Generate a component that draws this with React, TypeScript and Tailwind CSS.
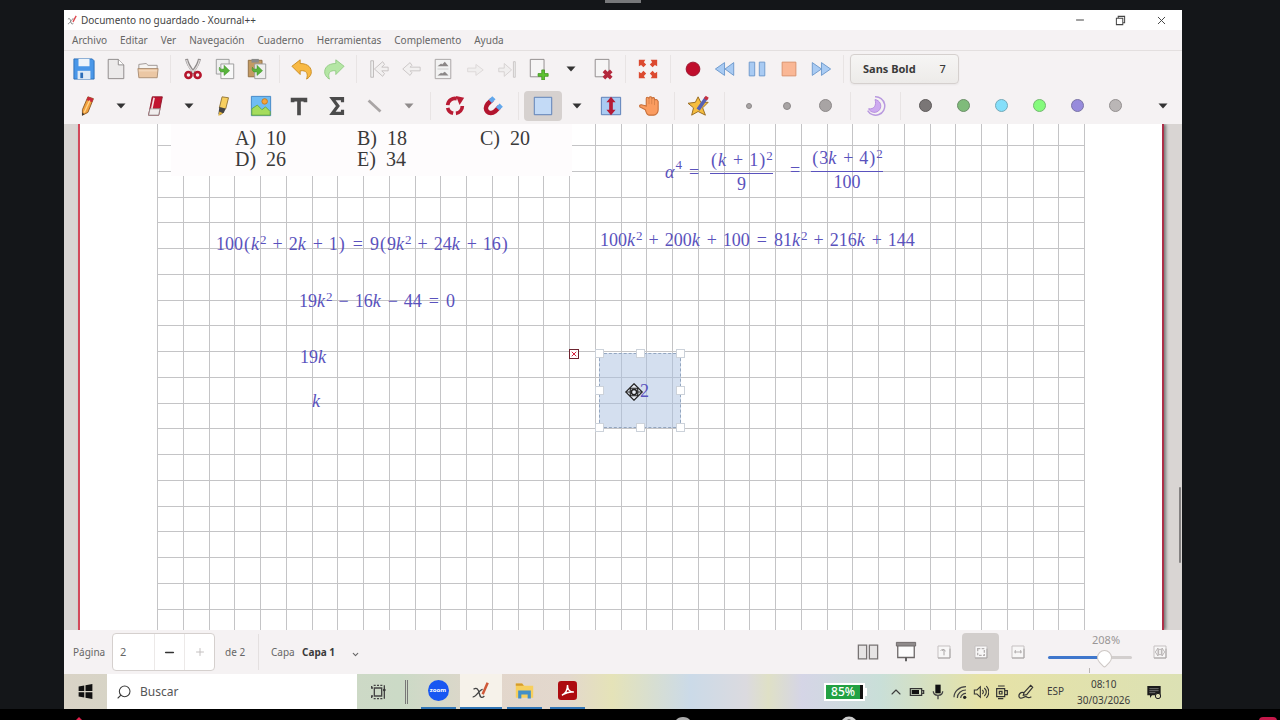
import type { ReactNode } from "react"
import { Search, ChevronUp, ChevronDown, Minus, Plus, X } from "lucide-react"

type IconProps = { children: ReactNode; className?: string }

function Icon({ children, className = "size-[22px]" }: IconProps) {
  return (
    <svg viewBox="0 0 24 24" fill="none" className={className} aria-hidden="true">
      {children}
    </svg>
  )
}

function Arrow({ color = "#333" }: { color?: string }) {
  return (
    <Icon className="size-3">
      <path d="M3 7h18l-9 10z" fill={color} />
    </Icon>
  )
}

type ToolProps = { label: string; children: ReactNode; className?: string }

function FileTool({ label, children }: ToolProps) {
  return (
    <button aria-label={label} className="flex h-8 w-8 shrink-0 items-center justify-center">
      {children}
    </button>
  )
}

function PenTool({ label, children, className = "" }: ToolProps) {
  return (
    <button
      aria-label={label}
      className={`flex h-[30px] w-[38px] shrink-0 items-center justify-center rounded ${className}`}
    >
      {children}
    </button>
  )
}

function DropTool({ label, color, className = "" }: { label: string; color?: string; className?: string }) {
  return (
    <button
      aria-label={label}
      className={`flex h-[30px] w-[30px] shrink-0 items-center justify-center ${className}`}
    >
      <Arrow color={color} />
    </button>
  )
}

function Divider({ className }: { className: string }) {
  return (
    <div className={`flex h-7 shrink-0 justify-center ${className}`}>
      <div className="w-px bg-[#e8e4e4]" />
    </div>
  )
}

const menus = ["Archivo", "Editar", "Ver", "Navegación", "Cuaderno", "Herramientas", "Complemento", "Ayuda"]

const widths = [
  { label: "Fino", size: "size-[6px]" },
  { label: "Medio", size: "size-2" },
  { label: "Grueso", size: "size-[13px]" },
]

const colors = [
  { label: "Gris oscuro", bg: "bg-[#7a7676] border-[#5e5a5a]" },
  { label: "Verde", bg: "bg-[#7fbb7a] border-[#6b8f68]" },
  { label: "Celeste", bg: "bg-[#84dffa] border-[#74a9b8]" },
  { label: "Verde claro", bg: "bg-[#84fb7c] border-[#74b870]" },
  { label: "Violeta", bg: "bg-[#978bdc] border-[#7a74a6]" },
  { label: "Gris", bg: "bg-[#bab6b6] border-[#949090]" },
]

function TitleBar() {
  return (
    <header className="flex h-5 items-center bg-white pl-[3px] text-[10px] text-[#444]">
      <svg viewBox="0 0 24 24" className="mr-[3px] size-[11px]" fill="none" aria-hidden="true">
        <path d="M2 9c4-3 5 0 6 5s3 7 6 4M14 8c-4 0-8 12-12 11" stroke="#777" strokeWidth="2" />
        <path d="M13 15L20 2" stroke="#e0484f" strokeWidth="3" />
      </svg>
      <h1 className="grow">Documento no guardado - Xournal++</h1>
      <div className="flex">
        <button aria-label="Minimizar" className="flex w-10 items-center justify-center">
          <Minus className="size-3" strokeWidth={2} />
        </button>
        <button aria-label="Restaurar" className="flex w-10 items-center justify-center">
          <Icon className="size-[11px]">
            <path d="M3 7h14v14H3zM7 7V3h14v14h-4" stroke="#444" strokeWidth="2.2" />
          </Icon>
        </button>
        <button aria-label="Cerrar" className="flex w-[42px] items-center justify-center">
          <X className="size-[13px]" strokeWidth={1.8} />
        </button>
      </div>
    </header>
  )
}

function FileToolbar() {
  return (
    <div className="flex h-9 items-center px-1">
      <FileTool label="Guardar">
        <Icon>
          <path d="M1 1h20l2 2v20H1z" fill="#4a97e8" stroke="#2b6db8" />
          <path d="M6 1h12v8H6z" fill="#eef4fa" />
          <path d="M5 14h14v9H5z" fill="#dfeaf5" />
          <path d="M8 16h3v6H8z" fill="#2b6db8" />
        </Icon>
      </FileTool>
      <FileTool label="Nuevo">
        <Icon>
          <path d="M3.500 1.500h11l6 6v15h-17z" fill="#eceaea" stroke="#8a8686" />
          <path d="M14.500 1.500v6h6" fill="#fff" stroke="#8a8686" />
        </Icon>
      </FileTool>
      <FileTool label="Abrir">
        <Icon>
          <path d="M2 12V7l8-1 2 2h10v4" fill="#f6f4f2" stroke="#9a9390" />
          <path d="M1 11.500h22l-1 10H2z" fill="#ebc7a4" stroke="#a98c72" />
          <path d="M2 14h20" stroke="#f6dfc8" />
        </Icon>
      </FileTool>
      <Divider className="w-[13px]" />
      <FileTool label="Cortar">
        <Icon>
          <path d="M5 1c1 7 5 11 9 16M19 1c-1 7-5 11-9 16" stroke="#8d8989" strokeWidth="3.200" />
          <path d="M5 2c1 7 5 11 8 14M19 2c-1 7-5 11-8 14" stroke="#dedada" strokeWidth="1.400" />
          <circle cx="7" cy="18.500" r="3.300" stroke="#b5152c" strokeWidth="2.800" />
          <circle cx="17" cy="18.500" r="3.300" stroke="#b5152c" strokeWidth="2.800" />
        </Icon>
      </FileTool>
      <FileTool label="Copiar">
        <Icon>
          <path d="M2.500 1.500h14v16h-14z" fill="#efefef" stroke="#999" />
          <path d="M7.500 6.500h14v16h-14z" fill="#f8f8f8" stroke="#999" />
          <path d="M6 10c1 3 3 2 5 2V8l6 6-6 5v-4c-4 1-6-1-5-5z" fill="#58b43c" stroke="#3d8f27" strokeWidth="0.600" />
        </Icon>
      </FileTool>
      <FileTool label="Pegar">
        <Icon>
          <path d="M2.500 2.500h15v18h-15z" fill="#c39a62" stroke="#8c6c42" />
          <path d="M6 1h8v4H6z" fill="#8b8b8b" />
          <path d="M9.500 6.500h12v16h-12z" fill="#efefef" stroke="#999" />
          <path d="M7 10c1 3 3 2 5 2V8l6 6-6 5v-4c-4 1-6-1-5-5z" fill="#58b43c" stroke="#3d8f27" strokeWidth="0.600" />
        </Icon>
      </FileTool>
      <Divider className="w-[13px]" />
      <FileTool label="Deshacer">
        <Icon>
          <path d="M1 9l9-7v4c9 0 13 5 12 11-1 3-3 5-5 6 2-6 0-10-7-9v4z" fill="#f8b943" stroke="#c98b20" />
        </Icon>
      </FileTool>
      <FileTool label="Rehacer">
        <Icon>
          <path d="M23 9l-9-7v4C5 6 1 11 2 17c1 3 3 5 5 6-2-6 0-10 7-9v4z" fill="#b4e6a4" stroke="#93cb84" />
        </Icon>
      </FileTool>
      <Divider className="w-[13px]" />
      <FileTool label="Primera página">
        <Icon>
          <path d="M3 3h3v18H3z" fill="#eee" stroke="#bdb9b9" />
          <path d="M7 12l9-8 2 3-3 3h7v4h-7l3 3-2 3z" fill="#f2f0f0" stroke="#c4c0c0" />
        </Icon>
      </FileTool>
      <FileTool label="Página anterior">
        <Icon>
          <path d="M3 12l8-7 2 3-2 2h11v4H11l2 2-2 3z" fill="#f2f0f0" stroke="#c8c4c4" />
        </Icon>
      </FileTool>
      <FileTool label="Ir a página">
        <Icon>
          <path d="M3.500 1.500h17v21h-17z" fill="#f2f2f2" stroke="#a5a1a1" />
          <path d="M6 9l4-3 1 1 3-3 4 5zM6 19l4-3 1 1 3-2 4 4z" fill="#8b8787" />
          <path d="M6 12h12" stroke="#ccc" />
        </Icon>
      </FileTool>
      <FileTool label="Página siguiente">
        <Icon>
          <path d="M21 13l-8-6v4H4v4h9v4z" fill="#f0eeee" stroke="#dcd8d8" />
        </Icon>
      </FileTool>
      <FileTool label="Última página">
        <Icon>
          <path d="M17 13L9 6v5H3v4h6v5z" fill="#f0eeee" stroke="#d4d0d0" />
          <path d="M19 4h2v17h-2z" fill="#eee" stroke="#c9c5c5" />
        </Icon>
      </FileTool>
      <FileTool label="Añadir página">
        <Icon>
          <path d="M2.500 1.500h15v19h-15z" fill="#f6f5f5" stroke="#8c8888" />
          <path d="M15 13h3v4h4v3h-4v4h-3v-4h-4v-3h4z" fill="#5cc331" stroke="#3c8f1c" strokeWidth="0.800" />
        </Icon>
      </FileTool>
      <FileTool label="Tipo de página">
        <Arrow />
      </FileTool>
      <FileTool label="Eliminar página">
        <Icon>
          <path d="M3.500 1.500h15v19h-15z" fill="#f6f5f5" stroke="#8c8888" />
          <path d="M13 14l8 8M21 14l-8 8" stroke="#b3283c" strokeWidth="4" />
        </Icon>
      </FileTool>
      <Divider className="w-[13px]" />
      <FileTool label="Pantalla completa">
        <Icon>
          <path
            d="M2 2h7L7.500 4.500 10 7 7 10 4.500 7.500 2 9zM22 2h-7l1.500 2.500L14 7l3 3 2.500-2.500L22 9zM2 22h7l-1.500-2.500L10 17l-3-3-2.500 2.500L2 15zM22 22h-7l1.500-2.500L14 17l3-3 2.500 2.500L22 15z"
            fill="#dc4a30"
          />
        </Icon>
      </FileTool>
      <Divider className="w-[13px]" />
      <FileTool label="Grabar">
        <Icon>
          <circle cx="12" cy="12" r="7.500" fill="#c00d2c" stroke="#97102a" />
        </Icon>
      </FileTool>
      <FileTool label="Retroceder">
        <Icon>
          <path d="M11.500 5v14L1.500 12zM21.500 5v14l-9.500-7z" fill="#a9cbf3" stroke="#6b97cb" />
        </Icon>
      </FileTool>
      <FileTool label="Pausa">
        <Icon>
          <path d="M3.500 4.500h6v15h-6zM14.500 4.500h6v15h-6z" fill="#a9cbf3" stroke="#6b97cb" />
        </Icon>
      </FileTool>
      <FileTool label="Detener">
        <Icon>
          <path d="M4.500 4.500h15v15h-15z" fill="#fab795" stroke="#d98f69" />
        </Icon>
      </FileTool>
      <FileTool label="Avanzar">
        <Icon>
          <path d="M2.500 5v14l10-7zM12.500 5v14l10-7z" fill="#a9cbf3" stroke="#6b97cb" />
        </Icon>
      </FileTool>
      <Divider className="w-[13px]" />
      <button className="flex h-[30px] items-center gap-6 rounded border border-[#d5d0ce] bg-linear-to-b from-[#f6f5f4] to-[#edebe9] px-3 text-[11px] font-bold text-[#3a3a3a] shadow-xs">
        <span>Sans Bold</span>
        <span className="font-medium">7</span>
      </button>
    </div>
  )
}

function PenToolbar() {
  return (
    <div className="flex h-[37px] items-center px-1">
      <PenTool label="Lápiz">
        <Icon>
          <path d="M13 2l6 2-6 15-6 3 0-6z" fill="#f3a13c" stroke="#8b5a24" />
          <path d="M13 2l6 2-1.500 4-6-2.500z" fill="#c8293b" />
          <path d="M15 6L9 19" stroke="#ffd58a" strokeWidth="1.500" />
          <path d="M7 19l2 2-2.500 1.500z" fill="#333" />
        </Icon>
      </PenTool>
      <DropTool label="Opciones de lápiz" />
      <PenTool label="Borrador">
        <Icon>
          <path d="M9 2h11l-4 20H5z" fill="#c2132f" stroke="#8e1628" />
          <path d="M6.500 15h11L16 22H5z" fill="#f1eded" stroke="#8e8888" />
          <path d="M11 3L8.500 15" stroke="#f3dfe2" strokeWidth="1.800" />
        </Icon>
      </PenTool>
      <DropTool label="Opciones de borrador" />
      <PenTool label="Resaltador">
        <Icon>
          <path d="M11 2l7 1-3 12-7-1z" fill="#f7cf5f" stroke="#927434" />
          <path d="M8 13l7 2-2 4-4 3-2-1z" fill="#444" />
          <path d="M8 18l4 2-5 3z" fill="#e2b33c" />
        </Icon>
      </PenTool>
      <PenTool label="Imagen">
        <Icon>
          <path d="M1.500 1.500h21v21h-21z" fill="#6fbcf4" stroke="#3f83c4" />
          <path d="M2 15l6-4 5 5 4-3 5 5v4H2z" fill="#a5dc5c" stroke="#68a83e" />
          <circle cx="16" cy="7" r="3" fill="#f5a43a" stroke="#c57a1e" />
        </Icon>
      </PenTool>
      <PenTool label="Texto">
        <Icon>
          <path d="M4 5h16M12 5v17M5 3v5M19 3v5" stroke="#4b4b4b" strokeWidth="4" />
        </Icon>
      </PenTool>
      <PenTool label="Fórmula">
        <Icon>
          <path d="M18 8V4H7l6 8-6 8h11v-4" stroke="#4b4b4b" strokeWidth="3.500" />
        </Icon>
      </PenTool>
      <PenTool label="Línea">
        <Icon>
          <path d="M5 6l13 12" stroke="#a9a5a5" strokeWidth="3" />
        </Icon>
      </PenTool>
      <DropTool label="Formas" color="#8f8b8b" />
      <Divider className="w-3" />
      <PenTool label="Rotación">
        <Icon>
          <path d="M20 12a8 8 0 0 1-7 8M10 20a8 8 0 0 1-6-6M4 11a8 8 0 0 1 10-7" stroke="#b91c34" strokeWidth="4" />
          <path d="M13 1l9 2-5 8z" fill="#b91c34" />
        </Icon>
      </PenTool>
      <PenTool label="Imán">
        <Icon>
          <path d="M11 5l-5 5c-5 6 2 13 8 8l5-5" stroke="#b3152e" strokeWidth="5" />
          <path d="M9 7l4-4M17 15l4-4" stroke="#62a8ec" strokeWidth="5" />
        </Icon>
      </PenTool>
      <Divider className="w-3" />
      <PenTool label="Selección rectangular" className="bg-[#d6d1cf]">
        <Icon>
          <path d="M2.500 2.500h19v19h-19z" fill="#c3daf6" stroke="#5579b4" />
        </Icon>
      </PenTool>
      <DropTool label="Opciones de selección" />
      <PenTool label="Espacio vertical">
        <Icon>
          <path d="M1.500 2.500h21v19h-21z" fill="#aacbf2" stroke="#5579b4" />
          <path d="M12 2l5 6h-3v8h3l-5 6-5-6h3V8H7z" fill="#b51a36" />
        </Icon>
      </PenTool>
      <PenTool label="Mano">
        <Icon>
          <path
            d="M8 16L2 13c-1-2 1-3 3-2l4 1 0-8c0-2 2-2 3 0V3c1-2 3-1 3 0v1c1-2 3-1 3 0v2c1-2 3-1 4 1v9c0 3-2 6-5 6h-5c-2 0-3-2-4-6z"
            fill="#fb9c60"
            stroke="#c8703a"
            strokeWidth="1.200"
          />
          <path d="M12 4v6M15 4v6M18 6v5" stroke="#d9824c" />
        </Icon>
      </PenTool>
      <Divider className="w-3" />
      <PenTool label="Predeterminado">
        <Icon>
          <path d="M11 2l3 6 8 0-6 6 3 8-8-4-7 4 2-8-6-5 8-1z" fill="#f5bd3f" stroke="#94671d" />
          <path d="M20 3L11 16" stroke="#5660b4" strokeWidth="4" />
          <path d="M21 2l-2 3" stroke="#c6303f" strokeWidth="4" />
        </Icon>
      </PenTool>
      <Divider className="w-3" />
      {widths.map((w) => (
        <PenTool key={w.label} label={w.label}>
          <span className={`rounded-full border border-[#8d8989] bg-[#a8a4a4] ${w.size}`} />
        </PenTool>
      ))}
      <Divider className="w-3" />
      <PenTool label="Relleno">
        <Icon>
          <path d="M12 2a10 10 0 1 1-8 15" stroke="#b99adf" strokeWidth="1.600" />
          <path d="M12 5a7 7 0 1 1-7 10c6 1 9-4 7-10z" fill="#cdaaf0" stroke="#b38bdc" />
        </Icon>
      </PenTool>
      <Divider className="w-3" />
      {colors.map((c) => (
        <PenTool key={c.label} label={c.label}>
          <span className={`size-[13px] rounded-full border ${c.bg}`} />
        </PenTool>
      ))}
      <DropTool label="Más herramientas" className="ml-auto" />
    </div>
  )
}

// math typesetting helpers
const V = ({ children }: { children: ReactNode }) => <i className="mr-px">{children}</i>
const P = ({ children }: { children: ReactNode }) => <span className="mx-px">{children}</span>
const Op = ({ children }: { children: ReactNode }) => <span className="mx-[6px]">{children}</span>
const Rel = () => <span className="mx-[7px]">=</span>
const Sq = () => <sup className="text-[13px]">2</sup>

function Frac({ top, bottom }: { top: ReactNode; bottom: ReactNode }) {
  return (
    <span className="mx-1 inline-flex flex-col items-center">
      <span className="border-b border-[#5a52bd] pb-0.5">{top}</span>
      <span className="leading-5">{bottom}</span>
    </span>
  )
}

function Formula({ children, className }: { children: ReactNode; className: string }) {
  return (
    <div
      className={`absolute flex items-center font-['Liberation_Serif',serif] text-[18px] leading-[22px] whitespace-nowrap text-[#5a52bd] ${className}`}
    >
      {children}
    </div>
  )
}

const answers = [
  ["A)", "10"],
  ["B)", "18"],
  ["C)", "20"],
  ["D)", "26"],
  ["E)", "34"],
]

const columns = Array.from({ length: 37 }, (_, i) => Math.round(i * 25.75))
const rows = Array.from({ length: 40 }, (_, i) => Math.round(21 + i * 25.75))

const handles = [
  "-left-[5px] -top-[5px]",
  "left-[36px] -top-[5px]",
  "-right-[5px] -top-[5px]",
  "-left-[5px] top-[32px]",
  "-right-[5px] top-[32px]",
  "-left-[5px] -bottom-[5px]",
  "left-[36px] -bottom-[5px]",
  "-right-[5px] -bottom-[5px]",
]

function Canvas() {
  return (
    <main className="relative flex grow overflow-hidden bg-[#d9d5d3] pr-[18px] pl-[14px]">
      <div className="relative grow overflow-hidden border-x-2 border-l-[#d2485a] border-r-[#ad2f48] bg-white shadow-[2px_0_3px_#777]">
        <svg className="absolute top-0 left-[77px] h-full w-[928px]" aria-hidden="true">
          {columns.map((x) => (
            <line key={x} x1={x + 0.5} x2={x + 0.5} y1="0" y2="100%" stroke="#c4c4c6" />
          ))}
          {rows.map((y) => (
            <line key={y} x1="0" x2="100%" y1={y + 0.5} y2={y + 0.5} stroke="#c4c4c6" />
          ))}
        </svg>

        <div className="absolute top-0 left-[91px] w-[401px] bg-[#fefcfd] pt-1 pb-[6px] pl-16">
          <ul className="grid grid-cols-[122px_123px_1fr] font-['Liberation_Serif',serif] text-[20px] leading-[21px] text-[#3a3a3a]">
            {answers.map(([letter, value]) => (
              <li key={letter} className="flex gap-[10px]">
                <span>{letter}</span>
                <span>{value}</span>
              </li>
            ))}
          </ul>
        </div>

        <Formula className="top-[25px] left-[585px]">
          <V>α</V>
          <sup className="text-[13px]">4</sup>
          <Rel />
          <Frac top={<><P>(</P><V>k</V><Op>+</Op>1<P>)</P><Sq /></>} bottom="9" />
        </Formula>
        <Formula className="top-[23px] left-[703px]">
          <Rel />
          <Frac top={<><P>(</P>3<V>k</V><Op>+</Op>4<P>)</P><Sq /></>} bottom="100" />
        </Formula>
        <Formula className="top-[109px] left-[136px]">
          <span>
            100<P>(</P><V>k</V><Sq /><Op>+</Op>2<V>k</V><Op>+</Op>1<P>)</P><Rel />9<P>(</P>9<V>k</V><Sq /><Op>+</Op>24<V>k</V><Op>+</Op>16<P>)</P>
          </span>
        </Formula>
        <Formula className="top-[105px] left-[520px]">
          <span>
            100<V>k</V><Sq /><Op>+</Op>200<V>k</V><Op>+</Op>100<Rel />81<V>k</V><Sq /><Op>+</Op>216<V>k</V><Op>+</Op>144
          </span>
        </Formula>
        <Formula className="top-[166px] left-[219px]">
          <span>
            19<V>k</V><Sq /><Op>−</Op>16<V>k</V><Op>−</Op>44<Rel />0
          </span>
        </Formula>
        <Formula className="top-[222px] left-[220px]">
          19<V>k</V>
        </Formula>
        <Formula className="top-[266px] left-[232px]">
          <V>k</V>
        </Formula>

        <button aria-label="Eliminar selección" className="absolute top-[225px] left-[489px] border border-[#6d2430] bg-white">
          <X className="size-2 text-[#d8203c]" strokeWidth={3} />
        </button>
        <div className="absolute top-[229px] left-[519px] h-[75px] w-[82px] border border-dashed border-[#93a6c0] bg-[#a9bfe0]/50">
          {handles.map((pos) => (
            <span key={pos} className={`absolute size-[9px] border border-[#ccd2da] bg-white ${pos}`} />
          ))}
        </div>
        <Formula className="top-[256px] left-[560px]">2</Formula>
        <svg viewBox="0 0 24 24" className="absolute top-[259px] left-[545px] size-[18px]" fill="none" aria-hidden="true">
          <path d="M12 1l11 11-11 11L1 12z" fill="#e9eef6" stroke="#222" strokeWidth="1.600" />
          <path d="M7 7h10v10H7zM1 12h6M17 12h6" stroke="#222" strokeWidth="1.600" />
          <circle cx="12" cy="12" r="3.500" stroke="#222" strokeWidth="2" />
        </svg>
      </div>
      <div className="absolute top-[363px] right-px h-[76px] w-[2px] rounded bg-[#858282]" />
    </main>
  )
}

function ZoomGlyph({ children }: { children: ReactNode }) {
  return (
    <Icon className="size-4">
      <path d="M3 3h18v18H3z" fill="#f8f7f7" stroke="#c5c1c1" strokeWidth="1.500" />
      <path d="M3 21h18V7" stroke="#a9a5a5" strokeWidth="1.500" />
      {children}
    </Icon>
  )
}

function StatusBar() {
  return (
    <div className="flex h-11 items-center bg-[#f5f2f3] pr-[14px] pl-[9px] text-[10px] text-[#666]">
      <label htmlFor="page" className="w-[39px]">Página</label>
      <div className="flex h-[38px] items-stretch rounded border border-[#d5d0ce] bg-white">
        <input id="page" defaultValue="2" className="w-[41px] pl-[7px] text-[11px] outline-none" />
        <button aria-label="Página menos" className="flex w-[30px] items-center justify-center border-l border-[#ece9e8]">
          <Minus className="size-[13px] text-[#333]" strokeWidth={3} />
        </button>
        <button aria-label="Página más" className="flex w-[30px] items-center justify-center border-l border-[#ece9e8]">
          <Plus className="size-3 text-[#c4c0c0]" strokeWidth={2} />
        </button>
      </div>
      <span className="ml-[10px] w-[33px]">de 2</span>
      <div className="h-9 w-px bg-[#e4e0e0]" />
      <label htmlFor="layer" className="ml-3 w-[31px]">Capa</label>
      <select id="layer" className="w-[49px] appearance-none font-bold text-[#3a3a3a] outline-none">
        <option>Capa 1</option>
      </select>
      <ChevronDown className="mt-1 size-[9px]" strokeWidth={3} />

      <div className="ml-auto flex items-center">
        <button aria-label="Páginas dobles" className="flex w-[38px] items-center justify-center">
          <Icon>
            <path d="M1.500 4.500h9v15h-9zM13.500 4.500h9v15h-9z" fill="#e6e4e4" stroke="#777373" strokeWidth="1.400" />
          </Icon>
        </button>
        <button aria-label="Presentación" className="flex w-[38px] items-center justify-center">
          <Icon>
            <path d="M3 4h18v14H3z" fill="#fcfcfc" stroke="#6b6767" strokeWidth="1.400" />
            <path d="M1.500 1.500h21v4h-21z" fill="#8f8b8b" stroke="#6b6767" />
            <path d="M12 18v4" stroke="#555" strokeWidth="2" />
          </Icon>
        </button>
        <button aria-label="Zoom 100%" className="flex w-[37px] items-center justify-center">
          <ZoomGlyph>
            <path d="M7 10c2-3 6-2 7 1M12 8v9M9 10l3-2" stroke="#aaa6a6" strokeWidth="1.500" />
          </ZoomGlyph>
        </button>
        <button aria-label="Ajustar zoom" className="flex h-[38px] w-[37px] items-center justify-center rounded bg-[#d2cecc]">
          <ZoomGlyph>
            <path d="M7 7h10v10H7z" stroke="#b5b1b1" strokeWidth="2" strokeDasharray="4 2" />
          </ZoomGlyph>
        </button>
        <button aria-label="Alejar" className="flex w-[38px] items-center justify-center">
          <ZoomGlyph>
            <path d="M6 12h12M8 9v5M16 9v5" stroke="#b5b1b1" strokeWidth="1.500" />
          </ZoomGlyph>
        </button>
        <div className="ml-[11px] flex w-[84px] flex-col">
          <label htmlFor="zoom" className="ml-11 text-[11px] leading-4 text-[#9a9696]">208%</label>
          <input
            id="zoom"
            type="range"
            defaultValue="71"
            className="h-5 appearance-none bg-transparent [&::-webkit-slider-runnable-track]:h-[3px] [&::-webkit-slider-runnable-track]:rounded [&::-webkit-slider-runnable-track]:bg-linear-to-r [&::-webkit-slider-runnable-track]:from-[#3f77cc] [&::-webkit-slider-runnable-track]:from-70% [&::-webkit-slider-runnable-track]:to-[#d3cfce] [&::-webkit-slider-runnable-track]:to-70% [&::-webkit-slider-thumb]:-mt-[6px] [&::-webkit-slider-thumb]:size-[15px] [&::-webkit-slider-thumb]:rotate-45 [&::-webkit-slider-thumb]:appearance-none [&::-webkit-slider-thumb]:rounded-[50%_50%_2px_50%] [&::-webkit-slider-thumb]:border [&::-webkit-slider-thumb]:border-[#cdc7c4] [&::-webkit-slider-thumb]:bg-white"
          />
          <span className="ml-[41px] h-[5px] w-px bg-[#b9b5b4]" />
        </div>
        <button aria-label="Acercar" className="ml-5 flex w-4 items-center justify-center">
          <ZoomGlyph>
            <path d="M9 6v12l-4-6zM15 6v12l4-6zM10 8h4v8h-4z" stroke="#b0acac" strokeWidth="1.300" />
          </ZoomGlyph>
        </button>
      </div>
    </div>
  )
}

function TaskButton({ label, active, children }: { label: string; active?: boolean; children: ReactNode }) {
  return (
    <button
      aria-label={label}
      className={`flex h-full w-[42px] flex-col items-center justify-between ${active ? "bg-[#f6f2ea]" : ""}`}
    >
      <span className="flex grow items-center">{children}</span>
      <span className={`h-[2px] bg-[#2f74b5] ${active ? "w-full" : "w-[35px]"}`} />
    </button>
  )
}

function Taskbar() {
  return (
    <footer className="flex h-[35px] items-center bg-[linear-gradient(90deg,#d9d3c6_0%,#cbdac6_30%,#e2d6cb_38%,#e3d8cd_45%,#e5e3b8_49%,#cbdae8_56%,#dbdadf_61%,#dfe0c6_63%,#d5d5e6_66%,#c9dfd8_73%,#e6e2a6_82%,#dce1b4_100%)] text-[#3c3c3c]">
      <div className="flex h-full grow items-center">
        <button aria-label="Inicio" className="flex h-full w-[43px] items-center justify-center">
          <Icon className="size-[15px]">
            <path d="M1 4l9-1.500V11H1zM12 2l11-2v11H12zM1 13h9v8.500L1 20zM12 13h11v11l-11-2z" fill="#111" />
          </Icon>
        </button>
        <label className="flex h-full w-[250px] items-center gap-2 bg-white pl-[9px] text-xs">
          <Search className="size-4 -scale-x-100" strokeWidth={1.6} />
          <input placeholder="Buscar" aria-label="Buscar" className="w-40 outline-none placeholder:text-[#555]" />
        </label>
        <button aria-label="Vista de tareas" className="flex w-[43px] justify-center">
          <Icon className="size-4">
            <path d="M5 6h11v12H5zM1 3v3h2M1 21v-3h2M20 2v20" stroke="#444" strokeWidth="2" />
            <path d="M4 2h14M4 22h14" stroke="#444" strokeWidth="2" strokeDasharray="3 2" />
            <circle cx="20" cy="9" r="2" fill="#333" />
          </Icon>
        </button>
        <div className="mx-[5px] h-6 w-[3px] border-x border-[#777]" />
        <div className="ml-1 flex h-full gap-px">
          <TaskButton label="Zoom">
            <span className="flex size-[21px] items-center justify-center rounded-full bg-[#1857f2] text-[6px] font-bold text-white">
              zoom
            </span>
          </TaskButton>
          <TaskButton label="Xournal++" active>
            <Icon className="size-5">
              <path d="M3 10c4-3 6 0 7 5s3 6 6 3M14 10c-4 0-8 10-12 9" stroke="#444" strokeWidth="1.600" />
              <path d="M14 16L20 2" stroke="#cf5838" strokeWidth="3" />
            </Icon>
          </TaskButton>
          <TaskButton label="Explorador">
            <Icon className="size-[19px]">
              <path d="M1 3h8l3 3h11v15H1z" fill="#f7cf5c" />
              <path d="M1 3h8l2 3H1z" fill="#d59b2c" />
              <path d="M4 12h16v10h-4v-5H8v5H4z" fill="#438fc7" />
            </Icon>
          </TaskButton>
          <TaskButton label="Acrobat">
            <Icon className="size-[19px]">
              <rect width="24" height="24" rx="4" fill="#ad0b10" />
              <path d="M5 18c4-2 7-7 7-13 0 6 3 9 8 9-6-1-10 1-15 4z" stroke="#fff" strokeWidth="1.800" />
            </Icon>
          </TaskButton>
        </div>
      </div>

      <div className="flex h-full w-[402px] shrink-0 items-center pl-[44px] text-[10px]">
        <div className="flex items-center">
          <span className="flex h-[18px] w-[41px] items-center border-2 border-white bg-[#22a143] text-xs font-medium text-white">
            <span className="grow text-center">85%</span>
            <span className="h-full w-[3px] bg-[#111]" />
          </span>
          <span className="h-2 w-[2px] bg-white" />
        </div>
        <div className="ml-[21px] flex items-center gap-[5px]">
          <ChevronUp className="size-4" strokeWidth={1.6} />
          <Icon className="size-4">
            <path d="M2 7h17v10H2zM20 10h2v4h-2" stroke="#333" strokeWidth="1.800" />
            <path d="M4 9h11v6H4z" fill="#111" />
          </Icon>
          <Icon className="size-4">
            <path d="M8 1h8v13H8z" fill="#111" />
            <path d="M5 11c0 8 14 8 14 0M12 17v6" stroke="#444" strokeWidth="2" />
          </Icon>
          <Icon className="ml-px size-4">
            <path d="M3 20C3 11 11 4 21 4M8 21c0-7 6-12 13-12M13 21c0-4 4-7 8-7" stroke="#444" strokeWidth="1.800" />
            <circle cx="19" cy="20" r="2.500" fill="#222" />
          </Icon>
          <Icon className="size-4">
            <path d="M2 9h4l5-5v16l-5-5H2zM14 9c2 2 2 4 0 6M17 6c4 4 4 8 0 12M20 3c5 6 5 12 0 18" stroke="#333" strokeWidth="1.600" />
          </Icon>
          <Icon className="size-4">
            <path d="M4 7h12v12H4zM16 10h4v6h-4M6 3h10M6 22h8M8 11h4v4H8z" stroke="#333" strokeWidth="1.800" />
          </Icon>
          <Icon className="ml-[3px] size-4">
            <path d="M9 13L19 2l3 3-9 11-5 1zM9 13c-5-2-9 3-7 7 3 4 7-2 10-1s3 3 8 0" stroke="#333" strokeWidth="1.800" />
          </Icon>
        </div>
        <button className="ml-[13px]">ESP</button>
        <time className="ml-[13px] text-center leading-4">
          08:10
          <br />
          30/03/2026
        </time>
        <button aria-label="Notificaciones" className="ml-auto pr-5">
          <Icon className="size-4">
            <path d="M2 3h20v14H9l-3 4v-4H2z" fill="#1b1b1b" />
            <path d="M5 7h14M5 10h14M5 13h9" stroke="#999" />
            <circle cx="18" cy="18" r="4" fill="#d8d8b0" stroke="#222" strokeWidth="1.500" />
          </Icon>
        </button>
      </div>
    </footer>
  )
}

export default function App() {
  return (
    <div className="flex min-h-screen flex-col bg-[#141619] font-['Noto_Sans',sans-serif]">
      <div className="flex h-[10px] justify-center pr-[34px]">
        <div className="h-[3px] w-9 bg-[#77787a]" />
      </div>
      <div className="mr-[98px] ml-16 flex grow flex-col">
        <TitleBar />
        <nav className="flex h-[21px] items-center gap-[13px] border-b border-[#e3dfdf] bg-[#f5f2f3] pl-2 text-[10px] text-[#666]">
          {menus.map((m) => (
            <button key={m}>{m}</button>
          ))}
        </nav>
        <div className="bg-[#f5f2f3]">
          <FileToolbar />
          <PenToolbar />
        </div>
        <Canvas />
        <StatusBar />
        <Taskbar />
      </div>
      <svg viewBox="0 0 1280 11" className="h-[11px] w-full bg-black" fill="none" aria-hidden="true">
        <path d="M76 11l3-3 3 3z" fill="#e0204c" />
        <path d="M676 11a8 6 0 0 1 14 0z" fill="#aaa" />
        <circle cx="849" cy="16" r="7" stroke="#ccc" strokeWidth="3" />
        <rect x="1259" y="8" width="18" height="8" rx="4" fill="#c5184a" />
      </svg>
    </div>
  )
}
